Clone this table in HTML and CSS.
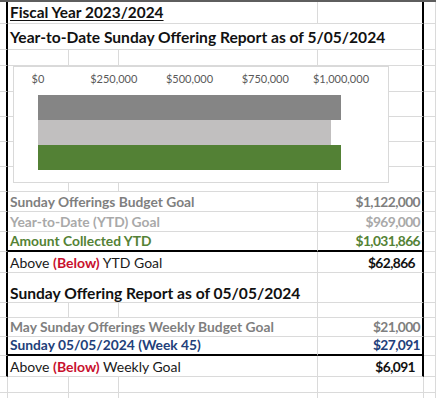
FILE: index.html
```html
<!DOCTYPE html>
<html lang="en">
<head>
<meta charset="utf-8">
<title>Sunday Offering Report</title>
<link rel="stylesheet" href="styles.css">
</head>
<body>
<div class="sheet">
  <!-- row 1 -->
  <div class="c lb"></div>
  <div class="c txt s3 title r1"><span class="u">Fiscal Year 2023/2024</span></div>
  <div class="c rb"></div>
  <div class="c"></div>
  <!-- row 2 -->
  <div class="c lb"></div>
  <div class="c txt s4 rb title r2">Year-to-Date Sunday Offering Report as of 5/05/2024</div>
  <div class="c"></div>
  <!-- row 3 -->
  <div class="c lb"></div><div class="c"></div><div class="c"></div><div class="c"></div><div class="c rb"></div><div class="c"></div>
  <!-- rows 4-8 (behind chart) -->
  <div class="c lb"></div><div class="c"></div><div class="c"></div><div class="c"></div><div class="c rb"></div><div class="c"></div>
  <div class="c lb"></div><div class="c"></div><div class="c"></div><div class="c"></div><div class="c rb"></div><div class="c"></div>
  <div class="c lb"></div><div class="c"></div><div class="c"></div><div class="c"></div><div class="c rb"></div><div class="c"></div>
  <div class="c lb"></div><div class="c"></div><div class="c"></div><div class="c"></div><div class="c rb"></div><div class="c"></div>
  <div class="c lb"></div><div class="c"></div><div class="c"></div><div class="c"></div><div class="c rb"></div><div class="c"></div>
  <!-- row 9 -->
  <div class="c lb"></div>
  <div class="c txt s3 lbl gray">Sunday Offerings Budget Goal</div>
  <div class="c txt val rb gray">$1,122,000</div>
  <div class="c"></div>
  <!-- row 10 -->
  <div class="c lb"></div>
  <div class="c txt s3 lbl lgray">Year-to-Date (YTD) Goal</div>
  <div class="c txt val rb lgray">$969,000</div>
  <div class="c"></div>
  <!-- row 11 -->
  <div class="c lb"></div>
  <div class="c txt s3 lbl green thick">Amount Collected YTD</div>
  <div class="c txt val rb green thick">$1,031,866</div>
  <div class="c"></div>
  <!-- row 12 -->
  <div class="c lb"></div>
  <div class="c txt s3 plain">Above&nbsp;<b class="red">(Below)</b>&nbsp;YTD Goal</div>
  <div class="c txt val rb total">$62,866</div>
  <div class="c"></div>
  <!-- row 13 -->
  <div class="c lb"></div>
  <div class="c txt s3 title r13">Sunday Offering Report as of 05/05/2024</div>
  <div class="c rb"></div>
  <div class="c"></div>
  <!-- row 14 -->
  <div class="c lb"></div><div class="c"></div><div class="c"></div><div class="c"></div><div class="c rb"></div><div class="c"></div>
  <!-- row 15 -->
  <div class="c lb"></div>
  <div class="c txt s3 lbl gray">May Sunday Offerings Weekly Budget Goal</div>
  <div class="c txt val rb gray">$21,000</div>
  <div class="c"></div>
  <!-- row 16 -->
  <div class="c lb"></div>
  <div class="c txt s3 lbl navy thick">Sunday 05/05/2024 (Week 45)</div>
  <div class="c txt val rb navy thick">$27,091</div>
  <div class="c"></div>
  <!-- row 17 -->
  <div class="c lb"></div>
  <div class="c txt s3 plain">Above&nbsp;<b class="red">(Below)</b>&nbsp;Weekly Goal</div>
  <div class="c txt val rb total">$6,091</div>
  <div class="c"></div>
  <!-- rows 18-19 -->
  <div class="c"></div><div class="c"></div><div class="c"></div><div class="c"></div><div class="c"></div><div class="c"></div>
  <div class="c"></div><div class="c"></div><div class="c"></div><div class="c"></div><div class="c"></div><div class="c"></div>

  <div class="chart">
    <div class="axis">
      <span class="tick" style="left:0%">$0</span>
      <span class="tick" style="left:25%">$250,000</span>
      <span class="tick" style="left:50%">$500,000</span>
      <span class="tick" style="left:75%">$750,000</span>
      <span class="tick" style="left:100%">$1,000,000</span>
    </div>
    <div class="bars">
      <div class="bar bar-budget" style="width:100%"></div>
      <div class="bar bar-goal" style="width:96.7%"></div>
      <div class="bar bar-collected" style="width:100%"></div>
    </div>
  </div>
</div>
</body>
</html>
```
FILE: styles.css
```css
html, body {
  margin: 0;
  padding: 0;
  background: #fff;
  overflow: hidden;
}

body {
  font-family: "Lato", "Liberation Sans", sans-serif;
  color: #1a1a1a;
}

.sheet {
  position: relative;
  display: grid;
  grid-template-columns: 8px 61px 50px 199px 106px 12px;
  grid-template-rows: 22px 26px 16px 26px 25px 25px 25px 25px 20px 20px 20px 21px 30px 15px 19px 19px 21px 16px 30px;
  border-top: 2px solid #5e5e5e;
  width: 436px;
}

.c {
  box-sizing: border-box;
  border-right: 1px solid #dadada;
  border-bottom: 1px solid #dadada;
  min-width: 0;
}

.lb { border-right: 2px solid #000; }
.rb { border-right: 2px solid #000; }
.thick { border-bottom: 2px solid #000; }

.s3 { grid-column: span 3; }
.s4 { grid-column: span 4; }

.txt {
  display: flex;
  align-items: flex-end;
  white-space: nowrap;
  line-height: 18px;
  padding-left: 2px;
}

.title {
  font-weight: 700;
  font-size: 15.5px;
  color: #111;
}
.r1 { padding-bottom: 2px; font-size: 15.4px; }
.r2 { padding-bottom: 3px; font-size: 15.6px; }
.r13 { font-size: 15.6px; }

.u {
  text-decoration: underline;
  text-decoration-thickness: 1px;
  text-underline-offset: 2px;
}

.lbl {
  font-weight: 700;
  font-size: 13.8px;
}

.plain {
  font-size: 14px;
  color: #1a1a1a;
}

.val {
  justify-content: flex-end;
  font-weight: 700;
  font-size: 13.8px;
  letter-spacing: -0.6px;
  padding-left: 0;
  padding-right: 2px;
}

.total {
  color: #111;
  padding-right: 7px;
}

.gray { color: #7f7f7f; }
.lgray { color: #a9a9a9; }
.green { color: #548235; }
.navy { color: #22407a; }
.red { color: #c8102e; font-weight: 700; }

/* floating chart object */
.chart {
  position: absolute;
  left: 13px;
  top: 64px;
  width: 376px;
  height: 117px;
  box-sizing: border-box;
  border: 1px solid #d9d9d9;
  background: #fff;
  padding: 5px 0 0 24px;
}

.axis {
  position: relative;
  width: 303px;
  height: 13px;
  font-size: 11px;
  line-height: 13px;
  color: #595959;
}

.tick {
  position: absolute;
  top: 0;
  transform: translateX(-50%);
  white-space: nowrap;
}

.bars {
  margin-top: 10px;
  width: 303px;
  display: flex;
  flex-direction: column;
}

.bar { height: 25px; }
.bar-budget { background: #858585; }
.bar-goal { background: #c1bfbf; }
.bar-collected { background: #538135; }
```
